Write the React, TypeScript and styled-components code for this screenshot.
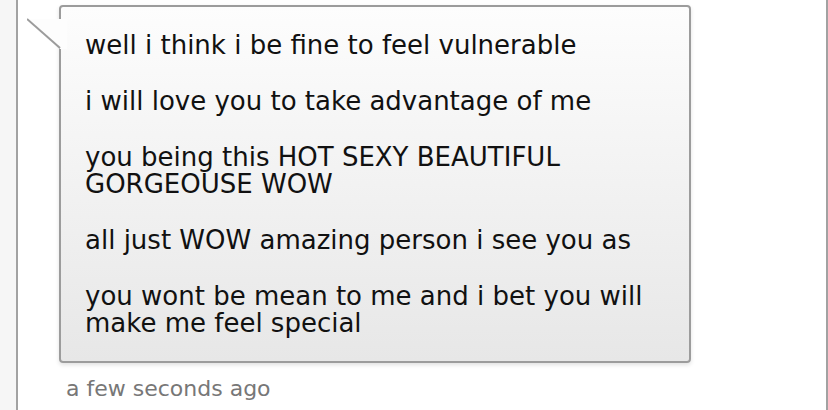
import styled, { createGlobalStyle } from "styled-components";

const GlobalStyle = createGlobalStyle`
  html, body {
    margin: 0;
    padding: 0;
    background: #f6f6f6;
    font-family: "DejaVu Sans", Verdana, sans-serif;
  }
`;

const Page = styled.div`
  display: flex;
  height: 410px;
  padding-left: 16px;
  overflow: hidden;
`;

const Column = styled.div`
  width: 793px;
  height: 100%;
  background: #fff;
  border-left: 2px solid #a2a2a2;
  border-right: 2px solid #a2a2a2;
  padding: 5px 0 0 41px;
  box-sizing: content-box;
`;

const Message = styled.div`
  display: flex;
  flex-direction: column;
  align-items: flex-start;
`;

const Bubble = styled.div`
  position: relative;
  width: 580px;
  padding: 25px 24px 24px 24px;
  border: 2px solid #9c9c9c;
  border-radius: 4px;
  background: linear-gradient(#fdfdfd, #e7e7e7);
  box-shadow: 0 2px 4px rgba(0, 0, 0, 0.12);
  color: #111;
  font-size: 26px;
  line-height: 27px;

  .tail {
    position: absolute;
    left: -34px;
    top: 10px;
  }
`;

const Para = styled.p`
  margin: 0 0 29px;

  &:last-child {
    margin-bottom: 0;
  }
`;

const Stamp = styled.div`
  margin: 13px 0 0 7px;
  color: #777;
  font-size: 22px;
`;

const lines = [
  "well i think i be fine to feel vulnerable",
  "i will love you to take advantage of me",
  "you being this HOT SEXY BEAUTIFUL GORGEOUSE WOW",
  "all just WOW amazing person i see you as",
  "you wont be mean to me and i bet you will make me feel special",
];

export default function App() {
  return (
    <>
      <GlobalStyle />
      <Page>
        <Column>
          <Message>
            <Bubble>
              <svg className="tail" width="40" height="32" viewBox="0 0 40 32">
                <polygon points="0,2 40,2 40,32 33,32" fill="#fdfdfd" />
                <line x1="0" y1="2" x2="33" y2="31" stroke="#9c9c9c" strokeWidth="2" />
              </svg>
              {lines.map((l) => (
                <Para key={l}>{l}</Para>
              ))}
            </Bubble>
            <Stamp>a few seconds ago</Stamp>
          </Message>
        </Column>
      </Page>
    </>
  );
}
